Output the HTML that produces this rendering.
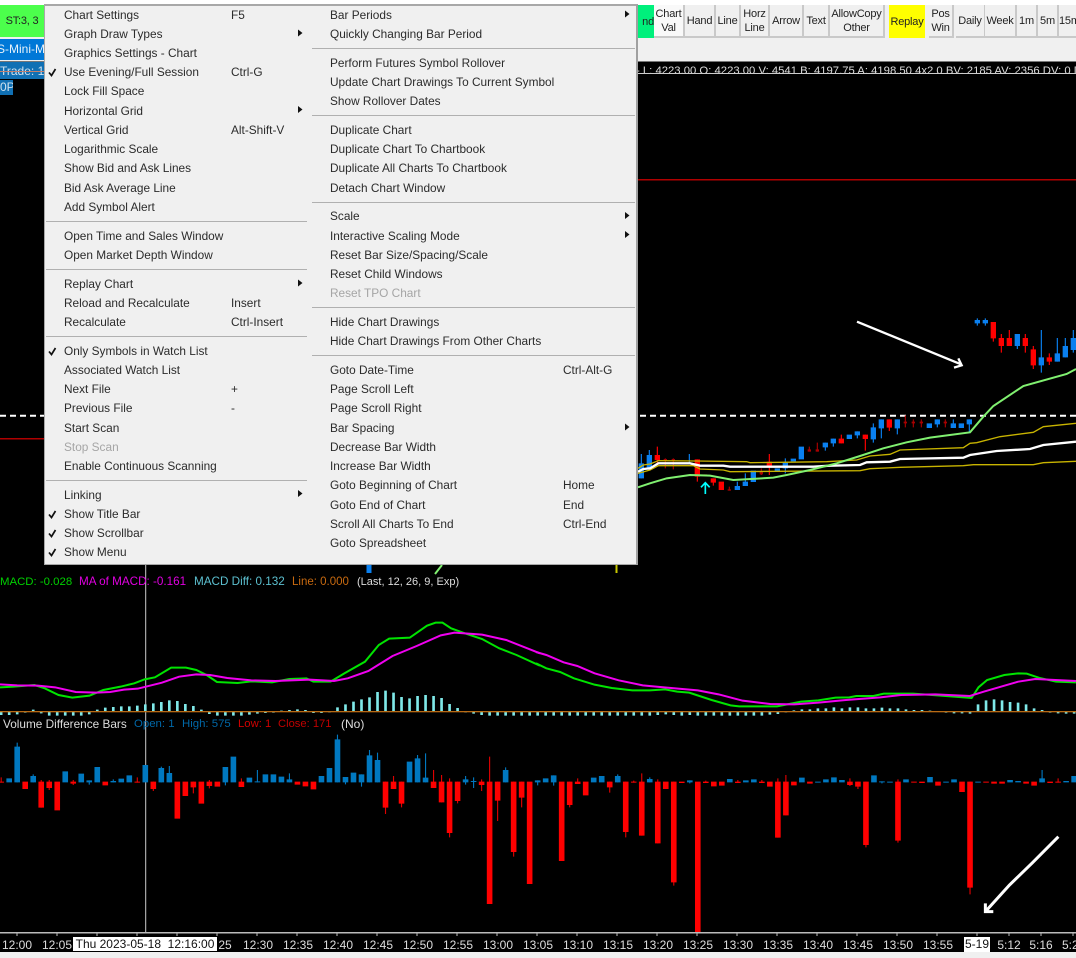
<!DOCTYPE html>
<html><head><meta charset="utf-8"><style>
html,body{margin:0;padding:0;width:1076px;height:958px;overflow:hidden;background:#f0f0f0;font-family:"Liberation Sans",sans-serif;font-size:12px}
body{filter:blur(.3px)}
.a{position:absolute;white-space:nowrap}
#chart{position:absolute;left:0;top:62px;width:1076px;height:890px;background:#000}
svg{position:absolute;left:0;top:0}
.btn{position:absolute;top:5px;height:31px;background:#f0f0f0;border-right:2px solid #c9c9c9;border-bottom:2px solid #c9c9c9;text-align:center;font-size:11px;letter-spacing:-.2px;line-height:14px;color:#222;display:flex;align-items:center;justify-content:center;box-sizing:content-box;white-space:nowrap}
#menu{position:absolute;left:44px;top:4px;width:594px;height:561px;background:#f0f0f0;border-top:2px solid #a8a8a8;border-left:1px solid #a8a8a8;border-right:2px solid #a0a0a0;border-bottom:1px solid #a8a8a8;box-sizing:border-box}
.m{position:absolute;white-space:nowrap;color:#2b2b2b;font-size:11.85px;line-height:14px;transform:translate(-45px,-6px)}
.d{color:#a5a5a5}
.s{position:absolute;height:1px;background:#b0b0b0;transform:translate(-45px,-6px);margin-top:1px}
.t{position:absolute;top:938px;color:#ddd;font-size:12px;line-height:14px;transform:translateX(-50%);white-space:nowrap}
</style></head><body>
<div class="a" style="left:0;top:0;width:1076px;height:5px;background:#fff"></div>
<div class="btn" style="left:0;width:44px;background:#4cff4c;border:0;height:32px">ST:3, 3</div>
<div class="a" style="left:0;top:39px;width:44px;height:21px;background:#0078d7;color:#e8f2fa;line-height:21px;overflow:hidden;text-indent:-3px">S-Mini-M</div>

<div class="btn" style="left:638px;width:16px;background:#00f07c;border:0;height:33px;justify-content:flex-end">nd</div>
<div class="btn" style="left:654px;width:29px;background:#f9f9f9">Chart<br>Val</div>
<div class="btn" style="left:685px;width:29px">Hand</div>
<div class="btn" style="left:716px;width:23px">Line</div>
<div class="btn" style="left:741px;width:27px">Horz<br>Line</div>
<div class="btn" style="left:770px;width:32px">Arrow</div>
<div class="btn" style="left:804px;width:24px">Text</div>
<div class="btn" style="left:830px;width:53px">AllowCopy<br>Other</div>
<div class="btn" style="left:889px;width:36px;background:#ffff00;border:0;height:33px">Replay</div>
<div class="btn" style="left:929px;width:23px">Pos<br>Win</div>
<div class="btn" style="left:956px;width:28px">Daily</div>
<div class="btn" style="left:985px;width:30px">Week</div>
<div class="btn" style="left:1017px;width:19px">1m</div>
<div class="btn" style="left:1038px;width:19px">5m</div>
<div class="btn" style="left:1059px;width:22px;justify-content:flex-start">15m</div>

<div id="chart"></div>
<svg width="1076" height="958" viewBox="0 0 1076 958" fill="none">
<rect x="0" y="61" width="1076" height="1" fill="#777"/>
<rect x="638" y="179" width="438" height="1.5" fill="#b00000"/>
<rect x="0" y="438" width="50" height="1.5" fill="#b00000"/>
<line x1="0" y1="415.7" x2="1076" y2="415.7" stroke="#fff" stroke-width="2" stroke-dasharray="6 4"/>
<line x1="145.7" y1="62" x2="145.7" y2="933" stroke="#ccc" stroke-width="1"/>

<g transform="translate(630,300) scale(.33333)">
<path stroke="#0a80f0" stroke-width="3.500" d="M34 462V535M58 450V505M178 462V490M322 545V570M346 520V558M466 475V520M586 428V452M610 416V440M682 394V415M730 370V428M754 358V415M802 358V403M922 358V382M970 358V384M1018 358V395M1042 55V77M1066 55V77M1162 102V147M1234 90V218M1282 114V185M1306 114V172M1330 90V158"/>
<path stroke="#0a80f0" stroke-width="16" d="M34 490V535M58 465V505M322 558V570M346 545V558M370 512V546M442 505V515M466 488V505M490 476V484M514 440V478M586 428V442M610 416V430M658 404V417M682 394V406M730 382V418M754 358V385M802 358V385M898 370V384M922 358V373M970 370V384M994 370V384M1018 358V373M1042 60V70M1066 60V70M1162 102V138M1234 172V196M1282 160V185M1306 138V172M1330 114V150"/>
<path stroke="#a80000" stroke-width="3.500" d="M106 475V505M130 475V508M298 560V572M394 505V525M538 440V455M562 428V455M826 346V382M850 358V382M874 358V382M946 358V382"/>
<path stroke="#a80000" stroke-width="10" d="M106 477V482M130 477V482M226 523V528M298 568V572M394 515V523M538 448V455M562 448V455M826 365V370M850 365V370M874 365V370M946 365V370"/>
<path stroke="#f00" stroke-width="3.500" d="M82 440V490M202 478V545M250 535V557M418 462V525M634 404V430M706 404V452M778 358V393M1090 66V125M1114 102V158M1138 90V138M1186 102V158M1210 138V207M1258 160V195"/>
<path stroke="#f00" stroke-width="16" d="M82 465V480M202 478V530M250 535V548M274 545V570M418 485V497M634 416V430M706 404V417M778 358V383M1090 66V115M1114 114V138M1138 114V138M1186 114V138M1210 148V196M1258 172V185"/>
<polyline stroke="#c8b400" stroke-width="4" points="24,520 60,510 85,497 190,497 210,507 280,510 300,515 690,512 720,506 810,502 1000,497 1030,494 1210,494 1240,488 1338,484"/>
<polyline stroke="#c8b400" stroke-width="4" points="24,505 40,495 60,492 85,482 200,483 350,485 360,488 590,485 680,480 720,468 780,463 810,450 1000,443 1020,430 1040,428 1110,410 1210,397 1240,380 1338,370"/>
<polyline stroke="#fff" stroke-width="7" points="24,515 40,507 60,505 85,490 180,490 210,497 280,497 300,500 550,500 600,497 690,495 710,487 780,485 810,477 1000,473 1020,465 1100,453 1200,447 1240,435 1338,425"/>
<polyline stroke="#80f070" stroke-width="6" points="24,562 60,550 110,535 180,525 240,527 310,540 430,533 470,525 540,510 620,490 690,468 760,445 830,427 900,413 1020,397 1060,350 1090,318 1180,258 1310,222 1338,207"/>
<path stroke="#00ffff" stroke-width="5" d="M226 582V548M213 562L226 548L239 562"/>
<path stroke="#fff" stroke-width="7" d="M681 65L993 193M985 175L995 196L972 203"/>
</g>
<path stroke="#0a80f0" stroke-width="5" d="M369 565V573"/>
<path stroke="#c8c800" stroke-width="2" d="M616.500 565V573"/>
<path stroke="#80f070" stroke-width="2" d="M442 565L435 574"/>

<g transform="translate(17.2,560) scale(8.007,.33333)">
<path stroke="#7fe9e9" stroke-width=".33" d="M-2 455V465M-1 455V465M0 455V463M1 455V458M2 455V449M3 455V460M4 455V467M5 455V467M6 455V467M7 455V467M8 455V467M9 455V463M10 455V449M11 455V443M12 455V441M13 455V439M14 455V439M15 455V437M16 455V433M17 455V430M18 455V426M19 455V421M20 455V423M21 455V432M22 455V438M23 455V449M24 455V462M25 455V467M26 455V467M27 455V467M28 455V467M29 455V464M30 455V461M31 455V459M32 455V458M33 455V452M34 455V450M35 455V448M36 455V450M37 455V459M38 455V459M39 455V457M40 455V442M41 455V433M42 455V425M43 455V418M44 455V412M45 455V396M46 455V392M47 455V398M48 455V411M49 455V415M50 455V408M51 455V405M52 455V408M53 455V414M54 455V432M55 455V444M56 455V457M57 455V461M58 455V465M59 455V467M60 455V467M61 455V467M62 455V467M63 455V467M64 455V467M65 455V467M66 455V467M67 455V467M68 455V467M69 455V467M70 455V467M71 455V467M72 455V467M73 455V467M74 455V467M75 455V467M76 455V467M77 455V467M78 455V467M79 455V467M80 455V465M81 455V463M82 455V465M83 455V467M84 455V465M85 455V467M86 455V467M87 455V467M88 455V467M89 455V467M90 455V467M91 455V467M92 455V467M93 455V467M94 455V464M95 455V462M96 455V457M97 455V451M98 455V448M99 455V448M100 455V445M101 455V445M102 455V442M103 455V445M104 455V442M105 455V442M106 455V445M107 455V445M108 455V443M109 455V445M110 455V445M111 455V448M112 455V450M113 455V450M114 455V452M116 455V458M117 455V460M118 455V460M119 455V461M120 455V433M121 455V421M122 455V418M123 455V421M124 455V426M125 455V428M126 455V433M127 455V445M128 455V450M129 455V458M130 455V460M131 455V461M132 455V461"/>
</g>
<rect x="0" y="711" width="1076" height="1.300" fill="#b86a14"/>
<g transform="translate(0,560) scale(.34435,.33333)">
<polyline vector-effect="non-scaling-stroke" stroke="#00e400" stroke-width="2" points="0,382 40,380 100,375 130,385 170,405 210,413 260,407 300,390 350,380 390,370 420,358 450,352 497,323 540,323 570,330 600,345 630,366 690,369 730,364 790,367 840,357 890,355 910,365 960,365 1000,340 1060,305 1100,255 1130,236 1190,233 1240,197 1265,188 1285,188 1310,205 1350,220 1400,237 1450,265 1500,285 1568,317"/>
<polyline vector-effect="non-scaling-stroke" stroke="#f000f0" stroke-width="2" points="0,373 50,376 110,377 160,382 220,396 280,398 320,396 360,389 400,386 470,368 520,350 570,343 610,345 660,354 730,361 800,363 900,359 970,363 1010,355 1070,333 1140,288 1210,258 1280,226 1320,218 1400,224 1470,240 1568,280"/>
</g>
<g transform="translate(536,600) scale(.34435,.33333)">
<polyline vector-effect="non-scaling-stroke" stroke="#00e400" stroke-width="2" points="0,190 30,205 70,216 110,235 170,254 220,264 280,271 330,271 375,268 410,275 445,278 510,300 565,316 590,319 700,319 770,305 820,301 870,293 910,292 930,288 980,288 1010,281 1095,281 1190,288 1265,294 1285,262 1310,240 1360,225 1400,220 1425,221 1460,233 1510,245 1568,247"/>
<polyline vector-effect="non-scaling-stroke" stroke="#f000f0" stroke-width="2" points="0,156 30,165 80,187 120,198 170,220 240,241 310,256 380,263 470,271 530,283 600,302 680,312 750,313 820,308 900,300 1000,292 1060,285 1160,283 1260,288 1300,275 1400,245 1450,237 1568,243"/>
</g>

<g transform="translate(17.2,720) scale(8.007,.33333)">
<path stroke="#0078c0" stroke-width=".14" d="M0 68V187M2 163V187M9 181V194M12 178V187M18 140V187M19 138V187M26 141V196M30 150V187M34 160V187M40 44V187M41 171V193M43 163V200M44 90V187M45 98V187M50 105V187M51 100V187M56 168V194M57 172V204M61 142V187M65 181V196M67 166V197M75 163V187M79 172V187M84 181V190M108 184V190M128 150V187"/>
<path stroke="#0078c0" stroke-width=".7" d="M-1 175V187M0 80V187M2 168V187M6 154V187M8 161V187M9 181V187M10 141V187M12 183V187M13 176V187M14 166V187M16 135V187M18 144V187M19 159V187M26 141V187M27 110V187M29 173V187M30 184V187M31 163V187M32 163V187M33 170V187M34 178V187M38 168V187M39 144V187M40 58V187M41 171V187M42 158V187M43 163V187M44 106V187M45 120V187M49 125V187M50 115V187M51 173V187M56 178V187M57 183V186M61 150V187M65 181V187M66 175V187M67 166V187M72 173V187M73 168V187M75 168V187M79 177V187M84 181V187M89 177V187M91 181V187M92 178V187M98 173V187M100 185V188M101 178V187M102 172V187M103 180V187M107 166V187M108 184V187M109 185V188M111 178V187M114 171V187M116 185V188M117 178V187M120 185V188M124 180V187M125 183V187M128 175V187M131 183V187M132 168V187"/>
<path stroke="#e00000" stroke-width=".14" d="M-2 172V188M3 180V263M4 180V210M7 180V195M15 172V188M17 185V213M22 185V220M24 180V205M28 175V201M46 185V282M47 168V207M48 185V262M52 150V204M53 165V247M54 175V352M55 185V250M58 178V213M59 110V552M60 185V303M62 185V410M63 185V262M69 185V262M70 175V192M74 185V218M76 185V352M77 182V188M78 160V347M80 178V370M82 185V497M86 182V189M90 180V189M93 180V189M95 175V353M96 165V286M104 175V198M105 185V207M106 185V382M110 178V368M119 185V523M130 175V188"/>
<path stroke="#f00" stroke-width=".7" d="M-2 185V188M1 185V207M3 185V263M4 185V204M5 185V271M7 185V191M11 185V196M15 185V188M17 185V207M20 185V296M21 185V228M22 185V202M23 185V251M24 185V198M25 185V200M28 185V201M35 185V194M36 185V199M37 185V208M46 185V263M47 185V207M48 185V251M52 185V204M53 185V247M54 185V339M55 185V243M58 185V195M59 185V552M60 185V242M62 185V396M63 185V233M64 185V492M68 185V423M69 185V255M70 185V192M71 185V226M74 185V202M76 185V336M77 185V188M78 185V347M80 185V370M81 185V207M82 185V487M83 185V189M85 185V636M86 185V189M87 185V199M88 185V197M90 185V189M93 185V189M94 185V200M95 185V353M96 185V286M97 185V196M99 185V191M104 185V195M105 185V200M106 185V375M110 185V362M112 185V188M113 185V189M115 185V197M118 185V216M119 185V503M121 185V188M122 185V191M123 185V191M126 185V191M127 185V197M129 185V189M130 185V188"/>
</g>

<rect x="0" y="932" width="1076" height="1.500" fill="#bbb"/>
<path stroke="#bbb" stroke-width="1" d="M17 933V936M57 933V936M97 933V936M137 933V936M177 933V936M217 933V936M257 933V936M297 933V936M337 933V936M377 933V936M417 933V936M457 933V936M497 933V936M537 933V936M577 933V936M617 933V936M657 933V936M697 933V936M737 933V936M777 933V936M817 933V936M857 933V936M897 933V936M937 933V936M977 933V936M1009 933V936M1041 933V936M1073 933V936"/>
<g stroke="#fff" transform="translate(536,720) scale(.34435,.33333)">
<path vector-effect="non-scaling-stroke" stroke-width="3" d="M1517 350L1440 430L1375 495L1305 575M1305 550L1305 575L1328 575"/>
</g>
</svg>

<div class="a" style="left:636px;top:64px;color:#ddd;line-height:14px;font-size:11.3px;width:440px;overflow:hidden">- L: 4223.00 O: 4223.00 V: 4541 B: 4197.75 A: 4198.50 4x2 0 BV: 2185 AV: 2356 DV: 0 D</div>
<div class="a" style="left:638px;top:73px;width:438px;height:1px;background:#ccc"></div>
<div class="a" style="left:0;top:62px;width:44px;height:17px;background:#1070b4;color:#cfe2ef;line-height:18px;overflow:hidden">Trade: 1</div>
<div class="a" style="left:0;top:71px;width:44px;height:1px;background:#c08070"></div>
<div class="a" style="left:0;top:80px;width:13px;height:15px;background:#1070b4;color:#cfe2ef;line-height:15px;overflow:hidden">0P</div>

<div class="a" style="left:0;top:575px;color:#00d000;line-height:14px;font-size:11.4px">MACD: -0.028</div>
<div class="a" style="left:79px;top:575px;color:#e000e0;line-height:14px;font-size:11.7px">MA of MACD: -0.161</div>
<div class="a" style="left:194px;top:575px;color:#5cc0d0;line-height:14px;font-size:11.7px">MACD Diff: 0.132</div>
<div class="a" style="left:292px;top:575px;color:#c86a10;line-height:14px;font-size:11.5px">Line: 0.000</div>
<div class="a" style="left:357px;top:575px;color:#ddd;line-height:14px;font-size:11px">(Last, 12, 26, 9, Exp)</div>

<div class="a" style="left:3px;top:717px;color:#ddd;line-height:14px;font-size:11.8px">Volume Difference Bars</div>
<div class="a" style="left:134px;top:717px;color:#0068a8;line-height:14px;font-size:11.4px">Open: 1</div>
<div class="a" style="left:182px;top:717px;color:#0068a8;line-height:14px;font-size:11.4px">High: 575</div>
<div class="a" style="left:238px;top:717px;color:#d00000;line-height:14px;font-size:11.3px">Low: 1</div>
<div class="a" style="left:278px;top:717px;color:#c00000;line-height:14px;font-size:11.2px">Close: 171</div>
<div class="a" style="left:341px;top:717px;color:#ddd;line-height:14px">(No)</div>

<span class="t" style="left:17px">12:00</span><span class="t" style="left:57px">12:05</span>
<span class="t" style="left:225px">25</span>
<span class="t" style="left:258px">12:30</span><span class="t" style="left:298px">12:35</span><span class="t" style="left:338px">12:40</span><span class="t" style="left:378px">12:45</span><span class="t" style="left:418px">12:50</span><span class="t" style="left:458px">12:55</span><span class="t" style="left:498px">13:00</span><span class="t" style="left:538px">13:05</span><span class="t" style="left:578px">13:10</span><span class="t" style="left:618px">13:15</span><span class="t" style="left:658px">13:20</span><span class="t" style="left:698px">13:25</span><span class="t" style="left:738px">13:30</span><span class="t" style="left:778px">13:35</span><span class="t" style="left:818px">13:40</span><span class="t" style="left:858px">13:45</span><span class="t" style="left:898px">13:50</span><span class="t" style="left:938px">13:55</span>
<span class="t" style="left:1009px">5:12</span><span class="t" style="left:1041px">5:16</span><span class="a" style="left:1062px;top:938px;color:#ddd;line-height:14px">5:2</span>
<div class="a" style="left:73px;top:937px;width:144px;height:14px;background:#fff;color:#111;line-height:15px;text-align:center">Thu 2023-05-18&nbsp; 12:16:00</div>
<div class="a" style="left:964px;top:937px;width:26px;height:15px;background:#fff;color:#111;line-height:15px;text-align:center">5-19</div>

<div id="menu">
<span class="m" style="left:64px;top:8px">Chart Settings</span><span class="m" style="left:231px;top:8px">F5</span>
<span class="m" style="left:64px;top:27px">Graph Draw Types</span>
<span class="m" style="left:64px;top:46px">Graphics Settings - Chart</span>
<span class="m" style="left:64px;top:65px">Use Evening/Full Session</span><span class="m" style="left:231px;top:65px">Ctrl-G</span>
<span class="m" style="left:64px;top:84px">Lock Fill Space</span>
<span class="m" style="left:64px;top:104px">Horizontal Grid</span>
<span class="m" style="left:64px;top:123px">Vertical Grid</span><span class="m" style="left:231px;top:123px">Alt-Shift-V</span>
<span class="m" style="left:64px;top:142px">Logarithmic Scale</span>
<span class="m" style="left:64px;top:161px">Show Bid and Ask Lines</span>
<span class="m" style="left:64px;top:181px">Bid Ask Average Line</span>
<span class="m" style="left:64px;top:200px">Add Symbol Alert</span>
<div class="s" style="left:46px;top:220px;width:261px"></div>
<span class="m" style="left:64px;top:229px">Open Time and Sales Window</span>
<span class="m" style="left:64px;top:248px">Open Market Depth Window</span>
<div class="s" style="left:46px;top:268px;width:261px"></div>
<span class="m" style="left:64px;top:277px">Replay Chart</span>
<span class="m" style="left:64px;top:296px">Reload and Recalculate</span><span class="m" style="left:231px;top:296px">Insert</span>
<span class="m" style="left:64px;top:315px">Recalculate</span><span class="m" style="left:231px;top:315px">Ctrl-Insert</span>
<div class="s" style="left:46px;top:335px;width:261px"></div>
<span class="m" style="left:64px;top:344px">Only Symbols in Watch List</span>
<span class="m" style="left:64px;top:363px">Associated Watch List</span>
<span class="m" style="left:64px;top:382px">Next File</span><span class="m" style="left:231px;top:382px">+</span>
<span class="m" style="left:64px;top:401px">Previous File</span><span class="m" style="left:231px;top:401px">-</span>
<span class="m" style="left:64px;top:421px">Start Scan</span>
<span class="m d" style="left:64px;top:440px">Stop Scan</span>
<span class="m" style="left:64px;top:459px">Enable Continuous Scanning</span>
<div class="s" style="left:46px;top:479px;width:261px"></div>
<span class="m" style="left:64px;top:488px">Linking</span>
<span class="m" style="left:64px;top:507px">Show Title Bar</span>
<span class="m" style="left:64px;top:526px">Show Scrollbar</span>
<span class="m" style="left:64px;top:545px">Show Menu</span>

<span class="m" style="left:330px;top:8px">Bar Periods</span>
<span class="m" style="left:330px;top:27px">Quickly Changing Bar Period</span>
<div class="s" style="left:312px;top:47px;width:323px"></div>
<span class="m" style="left:330px;top:56px">Perform Futures Symbol Rollover</span>
<span class="m" style="left:330px;top:75px">Update Chart Drawings To Current Symbol</span>
<span class="m" style="left:330px;top:94px">Show Rollover Dates</span>
<div class="s" style="left:312px;top:114px;width:323px"></div>
<span class="m" style="left:330px;top:123px">Duplicate Chart</span>
<span class="m" style="left:330px;top:142px">Duplicate Chart To Chartbook</span>
<span class="m" style="left:330px;top:161px">Duplicate All Charts To Chartbook</span>
<span class="m" style="left:330px;top:181px">Detach Chart Window</span>
<div class="s" style="left:312px;top:201px;width:323px"></div>
<span class="m" style="left:330px;top:209px">Scale</span>
<span class="m" style="left:330px;top:229px">Interactive Scaling Mode</span>
<span class="m" style="left:330px;top:248px">Reset Bar Size/Spacing/Scale</span>
<span class="m" style="left:330px;top:267px">Reset Child Windows</span>
<span class="m d" style="left:330px;top:286px">Reset TPO Chart</span>
<div class="s" style="left:312px;top:306px;width:323px"></div>
<span class="m" style="left:330px;top:315px">Hide Chart Drawings</span>
<span class="m" style="left:330px;top:334px">Hide Chart Drawings From Other Charts</span>
<div class="s" style="left:312px;top:354px;width:323px"></div>
<span class="m" style="left:330px;top:363px">Goto Date-Time</span><span class="m" style="left:563px;top:363px">Ctrl-Alt-G</span>
<span class="m" style="left:330px;top:382px">Page Scroll Left</span>
<span class="m" style="left:330px;top:401px">Page Scroll Right</span>
<span class="m" style="left:330px;top:421px">Bar Spacing</span>
<span class="m" style="left:330px;top:440px">Decrease Bar Width</span>
<span class="m" style="left:330px;top:459px">Increase Bar Width</span>
<span class="m" style="left:330px;top:478px">Goto Beginning of Chart</span><span class="m" style="left:563px;top:478px">Home</span>
<span class="m" style="left:330px;top:498px">Goto End of Chart</span><span class="m" style="left:563px;top:498px">End</span>
<span class="m" style="left:330px;top:517px">Scroll All Charts To End</span><span class="m" style="left:563px;top:517px">Ctrl-End</span>
<span class="m" style="left:330px;top:536px">Goto Spreadsheet</span>
</div>

<svg width="1076" height="958" viewBox="0 0 1076 958" fill="none">
<path fill="#111" d="M298 29.500L302.500 33L298 36.500ZM298 106L302.500 109.500L298 113ZM298 279.500L302.500 283L298 286.500ZM298 490L302.500 493.500L298 497ZM625 10.500L629.500 14L625 17.500ZM625 212L629.500 215.500L625 219ZM625 231L629.500 234.500L625 238ZM625 423.500L629.500 427L625 430.500Z"/>
<path stroke="#111" stroke-width="1.700" d="M49 72.500L51.500 75.500L55.500 69M49 351.500L51.500 354.500L55.500 348M49 514.500L51.500 517.500L55.500 511M49 533.500L51.500 536.500L55.500 530M49 552.500L51.500 555.500L55.500 549"/>
</svg>
</body></html>
